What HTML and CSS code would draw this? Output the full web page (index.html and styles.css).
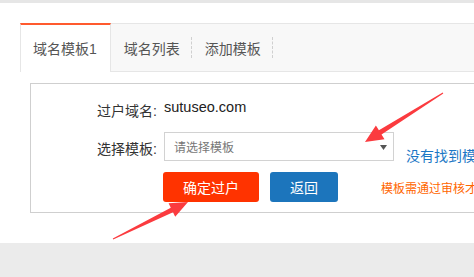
FILE: index.html
```html
<!DOCTYPE html>
<html lang="zh-CN">
<head>
  <meta charset="UTF-8" />
  <title>域名模板</title>
  <link rel="stylesheet" href="styles.css">
</head>
<body>

<div class="top-bar"></div>

<div class="page">
  <div class="tab-bar">
    <div class="tab active">域名模板1</div>
    <div class="tab">域名列表</div>
    <div class="tab">添加模板</div>
  </div>

  <div class="form-box">
    <div class="form-row row-domain">
      <label class="form-label">过户域名:</label>
      <span class="domain-value">sutuseo.com</span>
    </div>

    <div class="form-row row-template">
      <label class="form-label">选择模板:</label>
      <div class="fake-select">
        <span class="placeholder">请选择模板</span>
        <svg class="caret" width="7" height="5" viewBox="0 0 7 5"><path d="M0 0h7L3.5 5z" fill="#555"/></svg>
      </div>
      <a class="help-link" href="#">没有找到模板？</a>
    </div>

    <div class="form-row row-actions">
      <span class="form-label"></span>
      <button class="btn btn-red">确定过户</button>
      <button class="btn btn-blue">返回</button>
      <span class="notice">模板需通过审核才能使用</span>
    </div>
  </div>
</div>

<div class="footer"></div>

<!-- red arrows pasted on top of the screenshot -->
<svg class="arrows" width="474" height="277" viewBox="0 0 474 277">
  <polygon fill="#fb3b3f" points="443.3,93.4 381.5,134.5 384.5,139.2 365,142 375.9,125.6 378.9,130.3 442.7,92.6"/>
  <polygon fill="#fb3b3f" points="113.2,239.4 173,212.2 175.2,216.7 188,202 168.6,203.3 170.8,207.8 112.8,238.6"/>
</svg>

</body>
</html>
```

FILE: styles.css
```css
* {
  box-sizing: border-box;
  margin: 0;
  padding: 0;
}

body {
  font-family: "Liberation Sans", "Noto Sans CJK SC", sans-serif;
  color: #333;
  background: #fff;
  width: 474px;
  height: 277px;
  overflow: hidden;
  position: relative;
}

.top-bar {
  height: 3px;
  background: #e6e6e6;
}

.page {
  width: 800px;
  height: 240px;
  padding: 20px 0 0 20px;
}

.tab-bar {
  display: flex;
  height: 49px;
  background: #f8f8f8;
  border-top: 1px solid #e6e6e6;
  border-bottom: 1px solid #e6e6e6;
}

.tab {
  display: flex;
  align-items: center;
  padding: 0 12px 0 13px;
  font-size: 14px;
  color: #555;
  position: relative;
}

.tab + .tab::after {
  content: "";
  position: absolute;
  right: 0;
  top: 13px;
  bottom: 13px;
  border-right: 1px dashed #d0d0d0;
}

.tab.active {
  background: #fff;
  margin-top: -1px;
  margin-bottom: -1px;
  border-top: 2px solid #ff5a2e;
  border-left: 1px solid #e6e6e6;
  border-right: 1px solid #e6e6e6;
  padding: 0 13px 1px 12px;
}

.form-box {
  margin: 11px 0 0 10px;
  height: 130px;
  border: 1px solid #cfcfcf;
  padding-top: 13px;
}

.form-row {
  display: flex;
  align-items: flex-start;
}

.form-label {
  width: 126px;
  flex-shrink: 0;
  text-align: right;
  font-size: 14px;
  margin-right: 7px;
}

.row-domain {
  height: 28px;
}

.row-domain .form-label {
  line-height: 28px;
}

.domain-value {
  font-size: 14.5px;
  line-height: 20px;
  color: #222;
}

.row-template {
  margin-top: 7px;
  height: 29px;
}

.row-template .form-label {
  line-height: 29px;
  padding-top: 3px;
}

.fake-select {
  width: 230px;
  height: 29px;
  border: 1px solid #d2d2d2;
  display: flex;
  align-items: center;
  justify-content: space-between;
  padding: 0 6px 0 9px;
}

.placeholder {
  font-size: 12px;
  color: #777;
}

.caret {
  margin-top: 2px;
}

.help-link {
  margin-left: 12px;
  padding-top: 15px;
  font-size: 14px;
  line-height: 18px;
  color: #1b77c5;
  text-decoration: none;
  white-space: nowrap;
}

.row-actions {
  margin-top: 11px;
  align-items: center;
}

.row-actions .form-label {
  margin-right: 6px;
}

.btn {
  height: 30px;
  border: none;
  border-radius: 3px;
  color: #fff;
  font-family: inherit;
  font-size: 14px;
}

.btn-red {
  width: 96px;
  background: #ff3300;
}

.btn-blue {
  width: 68px;
  margin-left: 11px;
  background: #1c75bc;
}

.notice {
  margin-left: 43px;
  font-size: 12px;
  color: #ff6600;
  white-space: nowrap;
}

.footer {
  height: 40px;
  background: #ebebeb;
}

.arrows {
  position: absolute;
  left: 0;
  top: 0;
  pointer-events: none;
}
```
